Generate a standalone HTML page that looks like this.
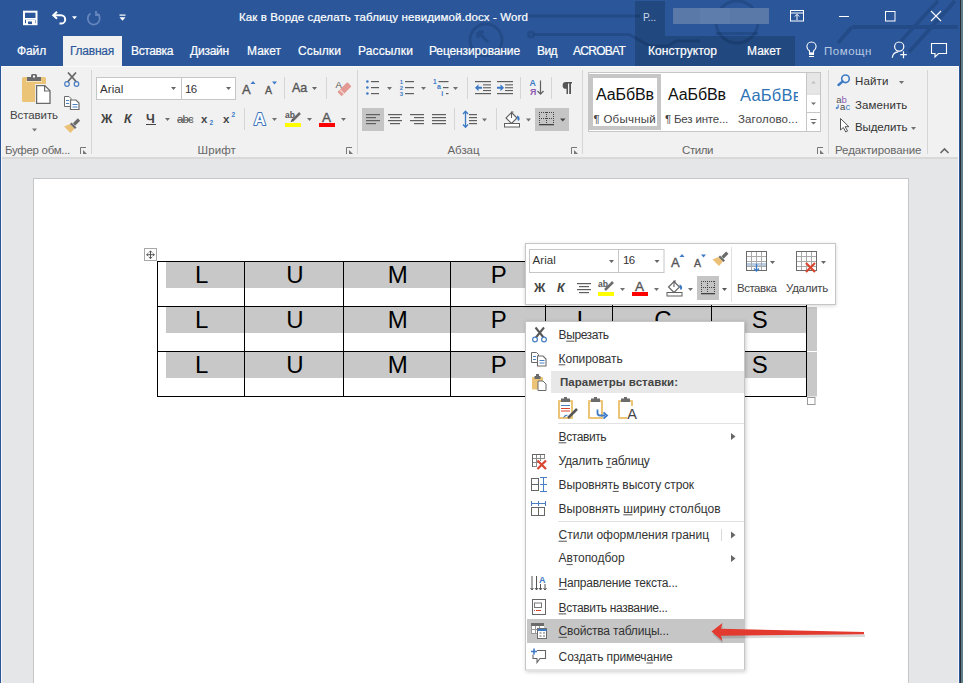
<!DOCTYPE html><html><head><meta charset="utf-8"><style>
html,body{margin:0;padding:0}
body{width:963px;height:683px;overflow:hidden;position:relative;font-family:"Liberation Sans",sans-serif;}
body>div,body>svg{position:absolute}
.t{white-space:nowrap;line-height:0;height:0}

</style></head><body>
<div style="left:0px;top:0px;width:963px;height:683px;background:#e5e6e8"></div>
<div style="left:0px;top:0px;width:960px;height:66px;background:#2b579a"></div>
<div style="left:961px;top:0px;width:2px;height:683px;background:#5f7f8b"></div>
<div style="left:960px;top:0px;width:1px;height:683px;background:#2a2d33"></div>
<div style="left:0px;top:66px;width:960px;height:617px;background:#2b579a"></div>
<div style="left:1px;top:66px;width:958px;height:91px;background:#f1f1f1;border-top:1px solid #fafafa;box-sizing:border-box"></div>
<div style="left:1px;top:157px;width:958px;height:2px;background:#d9d9d9"></div>
<div style="left:1px;top:159px;width:958px;height:524px;background:#e5e6e8"></div>
<div style="left:1px;top:66px;width:1px;height:617px;background:#f7f7f7"></div>
<div style="left:958px;top:66px;width:1px;height:617px;background:#f7f7f7"></div>
<div style="left:33px;top:178px;width:876px;height:505px;background:#fff;border-left:1px solid #c6c6c6;border-top:1px solid #c6c6c6;border-right:1px solid #c6c6c6;box-sizing:border-box"></div>
<svg style="left:0;top:0" width="963" height="683"><rect x="635" y="1" width="30" height="35" fill="#21487f"/><rect x="635" y="36" width="160" height="30" fill="#21487f"/><g fill="none" stroke="rgba(0,15,50,0.17)" stroke-width="3"><path d="M528 16H640"/><path d="M534 34.5H629L650 46H668L676 41H700"/><circle cx="531" cy="34.5" r="2.5"/><circle cx="486" cy="40" r="16"/><path d="M478 32l10 10M478 32v6M478 32h6"/><circle cx="737" cy="22" r="21"/><path d="M716 33.5h42"/><path d="M938 1L900 42M955 1L909 52M852 27H958M852 27L838 43" stroke-width="3.8"/><path d="M0 0"/></g><rect x="673" y="8" width="96" height="16" fill="#5a78a8"/><rect x="700" y="8" width="30" height="16" fill="#6080b0" opacity="0.6"/><rect x="96.5" y="77.5" width="139" height="22" fill="#fff" stroke="#c6c6c6"/><rect x="362" y="108" width="22" height="23" fill="#c5c5c5"/><rect x="535" y="108" width="34" height="23" fill="#c5c5c5"/><rect x="588.5" y="72.5" width="232" height="59" fill="#fff" stroke="#c6c6c6"/><rect x="589" y="74" width="72" height="56" fill="#c6c6c6"/><rect x="593" y="78" width="64" height="48" fill="#fff"/><rect x="806.5" y="72.5" width="14" height="59" fill="#fff" stroke="#c6c6c6"/><rect x="807" y="73" width="13" height="20" fill="#e6e6e6"/><rect x="806.5" y="93.5" width="14" height="1" fill="#c6c6c6"/><rect x="806.5" y="112" width="14" height="1" fill="#c6c6c6"/></svg>
<div class="t" style="left:239px;top:17.02px;font-size:11.5px;color:#fff;font-weight:normal;letter-spacing:0.117px;-webkit-text-stroke:0.2px #fff">Как в Ворде сделать таблицу невидимой.docx - Word</div>
<div style="left:63px;top:36px;width:59px;height:30px;background:#f1f1f1"></div>
<div class="t" style="left:17px;top:50.84px;font-size:12px;color:#fff;font-weight:normal;letter-spacing:-0.125px;-webkit-text-stroke:0.2px #fff">Файл</div>
<div class="t" style="left:70px;top:50.84px;font-size:12px;color:#2b579a;font-weight:normal;letter-spacing:-0.239px;-webkit-text-stroke:0.2px #2b579a">Главная</div>
<div class="t" style="left:131px;top:50.84px;font-size:12px;color:#fff;font-weight:normal;letter-spacing:-0.372px;-webkit-text-stroke:0.2px #fff">Вставка</div>
<div class="t" style="left:190px;top:50.84px;font-size:12px;color:#fff;font-weight:normal;letter-spacing:-0.223px;-webkit-text-stroke:0.2px #fff">Дизайн</div>
<div class="t" style="left:247px;top:50.84px;font-size:12px;color:#fff;font-weight:normal;letter-spacing:0.008px;-webkit-text-stroke:0.2px #fff">Макет</div>
<div class="t" style="left:298px;top:50.84px;font-size:12px;color:#fff;font-weight:normal;letter-spacing:0.126px;-webkit-text-stroke:0.2px #fff">Ссылки</div>
<div class="t" style="left:358px;top:50.84px;font-size:12px;color:#fff;font-weight:normal;letter-spacing:0.143px;-webkit-text-stroke:0.2px #fff">Рассылки</div>
<div class="t" style="left:429px;top:50.84px;font-size:12px;color:#fff;font-weight:normal;letter-spacing:-0.119px;-webkit-text-stroke:0.2px #fff">Рецензирование</div>
<div class="t" style="left:537px;top:50.84px;font-size:12px;color:#fff;font-weight:normal;letter-spacing:-0.570px;-webkit-text-stroke:0.2px #fff">Вид</div>
<div class="t" style="left:573px;top:50.84px;font-size:12px;color:#fff;font-weight:normal;letter-spacing:-0.731px;-webkit-text-stroke:0.2px #fff">ACROBAT</div>
<div class="t" style="left:648px;top:50.84px;font-size:12px;color:#fff;font-weight:normal;letter-spacing:0.053px;-webkit-text-stroke:0.2px #fff">Конструктор</div>
<div class="t" style="left:747px;top:50.84px;font-size:12px;color:#fff;font-weight:normal;letter-spacing:0.008px;-webkit-text-stroke:0.2px #fff">Макет</div>
<div class="t" style="left:10px;top:115.02px;font-size:11.5px;color:#444444;font-weight:normal;letter-spacing:-0.093px;">Вставить</div>
<div class="t" style="left:5px;top:150.02px;font-size:11.5px;color:#666666;font-weight:normal;letter-spacing:-0.299px;">Буфер обм...</div>
<div class="t" style="left:100px;top:89.02px;font-size:11.5px;color:#333;font-weight:normal;letter-spacing:0.099px;">Arial</div>
<div class="t" style="left:185px;top:89.02px;font-size:11.5px;color:#333;font-weight:normal;letter-spacing:-0.646px;">16</div>
<div class="t" style="left:242px;top:89.50px;font-size:13px;color:#555;font-weight:normal;-webkit-text-stroke:0.35px #555">A</div>
<div class="t" style="left:265px;top:90.36px;font-size:10.5px;color:#555;font-weight:normal;-webkit-text-stroke:0.35px #555">A</div>
<div class="t" style="left:292px;top:88.17px;font-size:12.5px;color:#555;font-weight:normal;letter-spacing:-0.145px;-webkit-text-stroke:0.35px #555">Aa</div>
<div class="t" style="left:335.5px;top:85.21px;font-size:9.5px;color:#555;font-weight:normal;">A</div>
<div class="t" style="left:101px;top:118.67px;font-size:12.5px;color:#444444;font-weight:bold;">Ж</div>
<div class="t" style="left:124px;top:118.67px;font-size:12.5px;color:#444444;font-weight:bold;font-style:italic">К</div>
<div class="t" style="left:146px;top:118.67px;font-size:12.5px;color:#444444;font-weight:bold;">Ч</div>
<div class="t" style="left:177px;top:119.02px;font-size:11.5px;color:#555;font-weight:normal;letter-spacing:-0.847px;">abc</div>
<div class="t" style="left:201px;top:119.02px;font-size:11.5px;color:#444444;font-weight:bold;">x</div>
<div class="t" style="left:209.5px;top:122.75px;font-size:6.5px;color:#3d7ac6;font-weight:bold;">2</div>
<div class="t" style="left:223px;top:119.02px;font-size:11.5px;color:#444444;font-weight:bold;">x</div>
<div class="t" style="left:231.5px;top:114.75px;font-size:6.5px;color:#3d7ac6;font-weight:bold;">2</div>
<div class="t" style="left:285px;top:115.05px;font-size:8.5px;color:#555;font-weight:bold;">ab</div>
<div class="t" style="left:322px;top:117.82px;font-size:13.5px;color:#555;font-weight:normal;-webkit-text-stroke:0.35px #555">A</div>
<div class="t" style="left:197.5px;top:150.02px;font-size:11.5px;color:#666666;font-weight:normal;letter-spacing:0.133px;">Шрифт</div>
<div class="t" style="left:447.5px;top:150.02px;font-size:11.5px;color:#666666;font-weight:normal;letter-spacing:-0.052px;">Абзац</div>
<div class="t" style="left:596px;top:94.96px;font-size:16px;color:#111;font-weight:normal;letter-spacing:-0.098px;">АаБбВв</div>
<div class="t" style="left:668px;top:94.96px;font-size:16px;color:#111;font-weight:normal;letter-spacing:-0.098px;">АаБбВв</div>
<div style="left:738px;top:80px;width:60px;height:25px;overflow:hidden"><div class="t" style="left:2px;top:15px;position:absolute;font-size:16.5px;color:#2e74b5;letter-spacing:0.2px">АаБбВв</div></div>
<div class="t" style="left:593.5px;top:119.02px;font-size:11.5px;color:#444;font-weight:normal;letter-spacing:0.255px;">¶ Обычный</div>
<div class="t" style="left:665px;top:119.02px;font-size:11.5px;color:#444;font-weight:normal;letter-spacing:-0.186px;">¶ Без инте...</div>
<div class="t" style="left:738px;top:119.02px;font-size:11.5px;color:#444;font-weight:normal;letter-spacing:0.125px;">Заголово...</div>
<div class="t" style="left:682px;top:150.02px;font-size:11.5px;color:#666666;font-weight:normal;letter-spacing:-0.426px;">Стили</div>
<div class="t" style="left:855px;top:81.02px;font-size:11.5px;color:#333;font-weight:normal;letter-spacing:0.137px;">Найти</div>
<div class="t" style="left:855px;top:105.02px;font-size:11.5px;color:#333;font-weight:normal;letter-spacing:0.078px;">Заменить</div>
<div class="t" style="left:855px;top:127.02px;font-size:11.5px;color:#333;font-weight:normal;letter-spacing:-0.094px;">Выделить</div>
<div class="t" style="left:835px;top:150.02px;font-size:11.5px;color:#666666;font-weight:normal;letter-spacing:-0.086px;">Редактирование</div>
<div class="t" style="left:643px;top:17.54px;font-size:10px;color:#cfd9ea;font-weight:normal;">Р...</div>
<div class="t" style="left:824px;top:51.02px;font-size:11.5px;color:#b9c9e4;font-weight:normal;letter-spacing:0.537px;">Помощн</div>
<svg style="left:0;top:0" width="963" height="66"><rect x="24" y="11.7" width="12.5" height="12.5" fill="none" stroke="#fff" stroke-width="2"/><rect x="25" y="18" width="11" height="1.8" fill="#fff"/><rect x="26" y="20" width="9" height="4" fill="#fff"/><rect x="28" y="21.5" width="4" height="2.6" fill="#2b579a"/><path d="M53.5 15.2H61a4.2 4.2 0 0 1 0 8.4H59.5" fill="none" stroke="#fff" stroke-width="2"/><path d="M57 11.7L53.3 15.2 57 18.7" fill="none" stroke="#fff" stroke-width="2"/><path d="M72 16.3h5l-2.5 3z" fill="#fff"/><path d="M90.5 13.5a6 6 0 1 0 6.5 0" fill="none" stroke="#6486bd" stroke-width="1.8"/><path d="M96 11v4h4" fill="none" stroke="#6486bd" stroke-width="1.8"/><rect x="119.5" y="14.5" width="6" height="1.2" fill="#fff"/><path d="M119.5 17.3h6l-3.0 3.5z" fill="#fff"/><rect x="790.5" y="10.5" width="13" height="10.5" fill="none" stroke="#fff" stroke-width="1"/><rect x="790.5" y="12.5" width="13" height="1" fill="#fff"/><path d="M797 20v-5.5M794.8 16.5l2.2-2.2 2.2 2.2" fill="none" stroke="#fff" stroke-width="1"/><rect x="839" y="16" width="10" height="1" fill="#fff"/><rect x="885.5" y="11.5" width="9.5" height="9.5" fill="none" stroke="#fff" stroke-width="1"/><path d="M931 11l10 10M941 11l-10 10" stroke="#fff" stroke-width="1.1"/><path d="M809.5 53v-2c-1.6-1-2.6-2.6-2.6-4.4a4.6 4.6 0 0 1 9.2 0c0 1.8-1 3.4-2.6 4.4v2z" fill="none" stroke="#fff" stroke-width="1.1"/><rect x="809" y="52.8" width="5" height="2.2" fill="#fff"/><rect x="809" y="56" width="5" height="1" fill="#fff"/><circle cx="899.2" cy="46.6" r="4.6" fill="none" stroke="#fff" stroke-width="1.2"/><path d="M892.3 57.8c.4-3.6 2.8-5.8 6-5.9" fill="none" stroke="#fff" stroke-width="1.2"/><path d="M900.3 54.7h6.5M903.5 51.2v7" stroke="#fff" stroke-width="1.2"/><path d="M931.5 43.5h15v10h-8l-3.5 3.5v-3.5h-3.5z" fill="none" stroke="#fff" stroke-width="1.1"/></svg>
<svg style="left:0;top:0" width="963" height="683"><rect x="166" y="262" width="640" height="26" fill="#c8c8c8"/><rect x="166" y="307" width="640" height="26" fill="#c8c8c8"/><rect x="166" y="352" width="640" height="26" fill="#c8c8c8"/><rect x="807" y="307" width="10" height="89.5" fill="#c8c8c8"/><rect x="807" y="351" width="10" height="1" fill="#fff"/><rect x="157" y="261" width="1" height="136" fill="#000"/><rect x="244" y="261" width="1" height="136" fill="#000"/><rect x="343" y="261" width="1" height="136" fill="#000"/><rect x="450" y="261" width="1" height="136" fill="#000"/><rect x="545" y="261" width="1" height="136" fill="#000"/><rect x="612" y="261" width="1" height="136" fill="#000"/><rect x="711" y="261" width="1" height="136" fill="#000"/><rect x="806" y="261" width="1" height="136" fill="#000"/><rect x="157" y="261" width="650" height="1" fill="#000"/><rect x="157" y="306" width="650" height="1" fill="#000"/><rect x="157" y="351" width="650" height="1" fill="#000"/><rect x="157" y="396" width="650" height="1" fill="#000"/><rect x="144.5" y="248.5" width="12" height="12" fill="#fff" stroke="#a8a8a8"/><path d="M150.5 251v7.5M146.8 254.7h7.5" stroke="#555" stroke-width="1"/><path d="M149 252.5l1.5-1.7 1.5 1.7M149 257l1.5 1.7 1.5-1.7M148.3 253.2l-1.7 1.5 1.7 1.5M152.7 253.2l1.7 1.5-1.7 1.5" fill="none" stroke="#555" stroke-width="0.9"/><rect x="807.5" y="397.5" width="7.5" height="7" fill="#fff" stroke="#9a9a9a"/></svg>
<div class="t" style="left:151.8px;width:100px;text-align:center;top:275.28px;font-size:24px;color:#000">L</div>
<div class="t" style="left:244.8px;width:100px;text-align:center;top:275.28px;font-size:24px;color:#000">U</div>
<div class="t" style="left:347.8px;width:100px;text-align:center;top:275.28px;font-size:24px;color:#000">M</div>
<div class="t" style="left:448.8px;width:100px;text-align:center;top:275.28px;font-size:24px;color:#000">P</div>
<div class="t" style="left:529.8px;width:100px;text-align:center;top:275.28px;font-size:24px;color:#000">I</div>
<div class="t" style="left:612.8px;width:100px;text-align:center;top:275.28px;font-size:24px;color:#000">C</div>
<div class="t" style="left:709.8px;width:100px;text-align:center;top:275.28px;font-size:24px;color:#000">S</div>
<div class="t" style="left:151.8px;width:100px;text-align:center;top:320.28px;font-size:24px;color:#000">L</div>
<div class="t" style="left:244.8px;width:100px;text-align:center;top:320.28px;font-size:24px;color:#000">U</div>
<div class="t" style="left:347.8px;width:100px;text-align:center;top:320.28px;font-size:24px;color:#000">M</div>
<div class="t" style="left:448.8px;width:100px;text-align:center;top:320.28px;font-size:24px;color:#000">P</div>
<div class="t" style="left:529.8px;width:100px;text-align:center;top:320.28px;font-size:24px;color:#000">I</div>
<div class="t" style="left:612.8px;width:100px;text-align:center;top:320.28px;font-size:24px;color:#000">C</div>
<div class="t" style="left:709.8px;width:100px;text-align:center;top:320.28px;font-size:24px;color:#000">S</div>
<div class="t" style="left:151.8px;width:100px;text-align:center;top:365.28px;font-size:24px;color:#000">L</div>
<div class="t" style="left:244.8px;width:100px;text-align:center;top:365.28px;font-size:24px;color:#000">U</div>
<div class="t" style="left:347.8px;width:100px;text-align:center;top:365.28px;font-size:24px;color:#000">M</div>
<div class="t" style="left:448.8px;width:100px;text-align:center;top:365.28px;font-size:24px;color:#000">P</div>
<div class="t" style="left:529.8px;width:100px;text-align:center;top:365.28px;font-size:24px;color:#000">I</div>
<div class="t" style="left:612.8px;width:100px;text-align:center;top:365.28px;font-size:24px;color:#000">C</div>
<div class="t" style="left:709.8px;width:100px;text-align:center;top:365.28px;font-size:24px;color:#000">S</div>
<div style="left:525px;top:243px;width:311px;height:62px;box-shadow:0 1px 4px rgba(0,0,0,0.16)"></div>
<svg style="left:0;top:0" width="963" height="683"><rect x="525.5" y="243.5" width="310" height="61" fill="#fff" stroke="#c6c6c6"/><rect x="529.5" y="249.5" width="134.5" height="23" fill="#fff" stroke="#c6c6c6"/><rect x="618" y="249.5" width="1" height="23" fill="#c6c6c6"/><rect x="697" y="276" width="22" height="24" fill="#c5c5c5"/></svg>
<div class="t" style="left:532.5px;top:260.02px;font-size:11.5px;color:#333;font-weight:normal;letter-spacing:0.099px;">Arial</div>
<div class="t" style="left:623px;top:260.02px;font-size:11.5px;color:#333;font-weight:normal;letter-spacing:-0.646px;">16</div>
<div class="t" style="left:671px;top:262.50px;font-size:13px;color:#555;font-weight:normal;-webkit-text-stroke:0.35px #555">A</div>
<div class="t" style="left:694px;top:263.36px;font-size:10.5px;color:#555;font-weight:normal;-webkit-text-stroke:0.35px #555">A</div>
<div class="t" style="left:534px;top:287.67px;font-size:12.5px;color:#444444;font-weight:bold;">Ж</div>
<div class="t" style="left:557px;top:287.67px;font-size:12.5px;color:#444444;font-weight:bold;font-style:italic">К</div>
<div class="t" style="left:598px;top:284.05px;font-size:8.5px;color:#555;font-weight:bold;">ab</div>
<div class="t" style="left:635px;top:286.82px;font-size:13.5px;color:#555;font-weight:normal;-webkit-text-stroke:0.35px #555">A</div>
<div class="t" style="left:737px;top:288.02px;font-size:11.5px;color:#444;font-weight:normal;letter-spacing:-0.478px;">Вставка</div>
<div class="t" style="left:786px;top:288.02px;font-size:11.5px;color:#444;font-weight:normal;letter-spacing:-0.272px;">Удалить</div>
<svg style="left:0;top:0" width="963" height="683"><path d="M609 260h5l-2.5 3z" fill="#666"/><path d="M654.5 260h5l-2.5 3z" fill="#666"/><path d="M679.5 257h5l-2.5-3z" fill="#3d7ac6"/><path d="M701 254.5h5l-2.5 3z" fill="#3d7ac6"/><path d="M722.5 257.5l4.8-4.8" stroke="#6b6b6b" stroke-width="3.2"/><path d="M718.5 257l4.5 4.5-4 4.5-6.5-6.5z" fill="#ebc077"/><path d="M720 255.5l5 5-1.5 1.5-5-5z" fill="#6b6b6b"/><rect x="577.0" y="283" width="14" height="1.2" fill="#5f5f5f"/><rect x="579.0" y="286" width="10" height="1.2" fill="#5f5f5f"/><rect x="577.0" y="289" width="14" height="1.2" fill="#5f5f5f"/><rect x="579.0" y="292" width="10" height="1.2" fill="#5f5f5f"/><path d="M605 290l8-8" stroke="#6b6b6b" stroke-width="2.5"/><rect x="598" y="292" width="16" height="4" fill="#ffff00"/><path d="M620 288h5l-2.5 3z" fill="#707070"/><rect x="632" y="292" width="16" height="4" fill="#ff0000"/><path d="M654 288h5l-2.5 3z" fill="#707070"/><path d="M674 281.5l5.5 5.5-5.5 5.5-5.5-5.5z" fill="#fff" stroke="#5f5f5f" stroke-width="1.1"/><path d="M674 287v-6h2" fill="none" stroke="#5f5f5f" stroke-width="1.1"/><path d="M679.5 284.5c2 .5 3 2 2.5 4.5l-1.5 1c-.5-1.5-1-3.5-1-5.5z" fill="#3d7ac6"/><rect x="667" y="292.5" width="15" height="3.5" fill="#fff" stroke="#5f5f5f" stroke-width="1"/><path d="M688 288h5l-2.5 3z" fill="#707070"/><rect x="701" y="281" width="1" height="1" fill="#444"/><rect x="701" y="287" width="1" height="1" fill="#444"/><rect x="703" y="281" width="1" height="1" fill="#444"/><rect x="703" y="287" width="1" height="1" fill="#444"/><rect x="705" y="281" width="1" height="1" fill="#444"/><rect x="705" y="287" width="1" height="1" fill="#444"/><rect x="707" y="281" width="1" height="1" fill="#444"/><rect x="707" y="287" width="1" height="1" fill="#444"/><rect x="709" y="281" width="1" height="1" fill="#444"/><rect x="709" y="287" width="1" height="1" fill="#444"/><rect x="711" y="281" width="1" height="1" fill="#444"/><rect x="711" y="287" width="1" height="1" fill="#444"/><rect x="713" y="281" width="1" height="1" fill="#444"/><rect x="713" y="287" width="1" height="1" fill="#444"/><rect x="701" y="281" width="1" height="1" fill="#444"/><rect x="707" y="281" width="1" height="1" fill="#444"/><rect x="714" y="281" width="1" height="1" fill="#444"/><rect x="701" y="283" width="1" height="1" fill="#444"/><rect x="707" y="283" width="1" height="1" fill="#444"/><rect x="714" y="283" width="1" height="1" fill="#444"/><rect x="701" y="285" width="1" height="1" fill="#444"/><rect x="707" y="285" width="1" height="1" fill="#444"/><rect x="714" y="285" width="1" height="1" fill="#444"/><rect x="701" y="287" width="1" height="1" fill="#444"/><rect x="707" y="287" width="1" height="1" fill="#444"/><rect x="714" y="287" width="1" height="1" fill="#444"/><rect x="701" y="289" width="1" height="1" fill="#444"/><rect x="707" y="289" width="1" height="1" fill="#444"/><rect x="714" y="289" width="1" height="1" fill="#444"/><rect x="701" y="291" width="1" height="1" fill="#444"/><rect x="707" y="291" width="1" height="1" fill="#444"/><rect x="714" y="291" width="1" height="1" fill="#444"/><rect x="701" y="293" width="14" height="1.3" fill="#444"/><path d="M722 288h5l-2.5 3z" fill="#555"/><rect x="731" y="247" width="1" height="55" fill="#e0e0e0"/><rect x="746.5" y="251.5" width="20" height="19" fill="#fff" stroke="#6b6b6b"/><rect x="747" y="263" width="19" height="4" fill="#b8cce4"/><path d="M751.5 252v18M756.5 252v18M761.5 252v18M747 256.5h19M747 261.5h19M747 266.5h19" stroke="#aaa" stroke-width="1"/><path d="M756.5 264v7M754 268.5l2.5 2.5 2.5-2.5" fill="none" stroke="#3d7ac6" stroke-width="1.3"/><path d="M770 261h5l-2.5 3z" fill="#666"/><rect x="796.5" y="251.5" width="20" height="19" fill="#fff" stroke="#6b6b6b"/><path d="M801.5 252v18M806.5 252v18M811.5 252v18M797 256.5h19M797 261.5h19M797 266.5h19" stroke="#aaa" stroke-width="1"/><path d="M806 263l9 9M815 263l-9 9" stroke="#d9452f" stroke-width="2.2"/><path d="M821 261h5l-2.5 3z" fill="#666"/></svg>
<div style="left:525px;top:321px;width:220px;height:350px;box-shadow:1px 1px 4px rgba(0,0,0,0.2)"></div>
<svg style="left:0;top:0" width="963" height="683"><rect x="525.5" y="321.5" width="219" height="348.5" fill="#fff" stroke="#c6c6c6"/><rect x="551" y="371" width="193" height="22" fill="#e8e8e8"/><rect x="527" y="619" width="217" height="24" fill="#c6c6c6"/><rect x="558" y="423" width="186" height="1" fill="#e2e2e2"/><rect x="558" y="521" width="186" height="1" fill="#e2e2e2"/></svg>
<div class="t" style="left:558.6px;top:335.04px;font-size:12px;color:#333;font-weight:normal;letter-spacing:-0.422px;">Вырезать</div>
<div class="t" style="left:558.6px;top:358.64px;font-size:12px;color:#333;font-weight:normal;letter-spacing:-0.061px;">Копировать</div>
<div class="t" style="left:558.6px;top:436.64px;font-size:12px;color:#333;font-weight:normal;letter-spacing:-0.421px;">Вставить</div>
<div class="t" style="left:558.6px;top:461.24px;font-size:12px;color:#333;font-weight:normal;letter-spacing:-0.206px;">Удалить таблицу</div>
<div class="t" style="left:558.6px;top:485.24px;font-size:12px;color:#333;font-weight:normal;letter-spacing:-0.080px;">Выровнять высоту строк</div>
<div class="t" style="left:558.6px;top:508.64px;font-size:12px;color:#333;font-weight:normal;letter-spacing:0.014px;">Выровнять ширину столбцов</div>
<div class="t" style="left:558.6px;top:535.04px;font-size:12px;color:#333;font-weight:normal;letter-spacing:-0.018px;">Стили оформления границ</div>
<div class="t" style="left:558.6px;top:558.44px;font-size:12px;color:#333;font-weight:normal;letter-spacing:-0.028px;">Автоподбор</div>
<div class="t" style="left:558.6px;top:583.24px;font-size:12px;color:#333;font-weight:normal;letter-spacing:-0.226px;">Направление текста...</div>
<div class="t" style="left:558.6px;top:607.74px;font-size:12px;color:#333;font-weight:normal;letter-spacing:-0.339px;">Вставить название...</div>
<div class="t" style="left:558.6px;top:631.14px;font-size:12px;color:#333;font-weight:normal;letter-spacing:-0.179px;">Свойства таблицы...</div>
<div class="t" style="left:558.6px;top:656.84px;font-size:12px;color:#333;font-weight:normal;letter-spacing:-0.126px;">Создать примечание</div>
<div class="t" style="left:560px;top:382.02px;font-size:11.5px;color:#444;font-weight:bold;letter-spacing:0.031px;">Параметры вставки:</div>
<svg style="left:0;top:0" width="963" height="683"><path d="M731 433.0l4.5 3.5-4.5 3.5z" fill="#666"/><path d="M731 531.5l4.5 3.5-4.5 3.5z" fill="#666"/><path d="M731 555.0l4.5 3.5-4.5 3.5z" fill="#666"/><rect x="721" y="529" width="1" height="12" fill="#dadada"/><path d="M535.5 327.5l8.5 10.5M544 327.5l-8.5 10.5" stroke="#555" stroke-width="2"/><circle cx="535" cy="339.5" r="2.4" fill="#fff" stroke="#4a7fc1" stroke-width="1.2"/><circle cx="544" cy="339.5" r="2.4" fill="#fff" stroke="#4a7fc1" stroke-width="1.2"/><path d="M531.5 352.5h5l2 2v8h-7z" fill="#fff" stroke="#6b6b6b" stroke-width="1"/><path d="M537.5 356h5.5l3 3v7h-8.5z" fill="#fff" stroke="#6b6b6b" stroke-width="1.1"/><rect x="533" y="356" width="3" height="1" fill="#4a7fc1"/><rect x="533" y="359" width="3" height="1" fill="#4a7fc1"/><rect x="539.5" y="360" width="5" height="1" fill="#4a7fc1"/><rect x="539.5" y="362.5" width="5" height="1" fill="#4a7fc1"/><rect x="532" y="377" width="11" height="12.5" rx="1" fill="#ebc477"/><rect x="534.5" y="376" width="6" height="3" fill="#6b6b6b"/><rect x="536" y="374" width="3" height="2.5" fill="#6b6b6b"/><path d="M538 381h5l3 3v6.5h-8z" fill="#fff" stroke="#6b6b6b" stroke-width="1"/><rect x="558" y="400" width="15" height="19" rx="1" fill="#ebc477"/><rect x="560" y="402" width="11" height="15" fill="#fff"/><rect x="561" y="398.5" width="9" height="3.5" fill="#6b6b6b"/><rect x="564" y="397" width="3" height="2" fill="#6b6b6b"/><rect x="588" y="400" width="15" height="19" rx="1" fill="#ebc477"/><rect x="590" y="402" width="11" height="15" fill="#fff"/><rect x="591" y="398.5" width="9" height="3.5" fill="#6b6b6b"/><rect x="594" y="397" width="3" height="2" fill="#6b6b6b"/><rect x="618" y="400" width="15" height="19" rx="1" fill="#ebc477"/><rect x="620" y="402" width="11" height="15" fill="#fff"/><rect x="621" y="398.5" width="9" height="3.5" fill="#6b6b6b"/><rect x="624" y="397" width="3" height="2" fill="#6b6b6b"/><rect x="561" y="405" width="9" height="1" fill="#4a7fc1"/><rect x="561" y="408" width="9" height="1" fill="#d9452f"/><rect x="561" y="410.5" width="9" height="1" fill="#d9452f"/><path d="M568 418l9-9" stroke="#555" stroke-width="2.5"/><path d="M563 418c1-3 3-4 5-3z" fill="#3d7ac6"/><path d="M597.5 409.5v3.5a2.5 2.5 0 0 0 2.5 2.5h5" fill="none" stroke="#3d7ac6" stroke-width="1.8"/><path d="M603.5 412.3l3.5 3.2-3.5 3.2" fill="none" stroke="#3d7ac6" stroke-width="1.8"/><rect x="627" y="406" width="11" height="14" fill="#fff"/><text x="627.3" y="419" font-family="Liberation Sans" font-size="14.5" fill="#444">A</text><path d="M532.5 454v13M536.5 454v13M540.5 454v7M544.5 454v4M532 454.5h13M532 458.5h13M532 462.5h6M532 466.5h5" stroke="#8a8a8a" stroke-width="1"/><path d="M532.5 454v13M532 454.5h13" stroke="#666" stroke-width="1"/><path d="M537.5 460.5l8.5 8.5M546 460.5l-8.5 8.5" stroke="#d9452f" stroke-width="2.2"/><rect x="531.5" y="478.5" width="7" height="12" fill="none" stroke="#666"/><rect x="531.5" y="484" width="7" height="1" fill="#666"/><path d="M543.5 477v15M540 477.5h7M540 484.5h7M540 491.5h7" stroke="#4a7fc1" stroke-width="1"/><rect x="531.5" y="507.5" width="13" height="8" fill="none" stroke="#666"/><rect x="538" y="507.5" width="1" height="8" fill="#666"/><path d="M531 503.5h15M531.5 501v5M538.5 501v5M545.5 501v5" stroke="#4a7fc1" stroke-width="1"/><path d="M532 576v14M536.5 576v14M540.5 584v6M545 584v6M530.5 588l1.5 2 1.5-2M535 588l1.5 2 1.5-2M539 588l1.5 2 1.5-2M543.5 588l1.5 2 1.5-2" fill="none" stroke="#555" stroke-width="1"/><text x="539" y="582.5" font-family="Liberation Sans" font-size="9" font-weight="bold" fill="#3d7ac6">A</text><rect x="532.5" y="599.5" width="13" height="15" fill="#fff" stroke="#666"/><rect x="534.5" y="603" width="7" height="4.5" fill="none" stroke="#777"/><rect x="534" y="610" width="1" height="1" fill="#d9452f"/><rect x="536" y="610" width="5" height="1" fill="#d9452f"/><rect x="531" y="623" width="13" height="3" fill="#6b6b6b"/><rect x="531" y="626" width="13" height="8" fill="#fff"/><path d="M531.5 626v8M535.5 626v8M539.5 626v3M531 629.5h13M531 633.5h7" stroke="#999" stroke-width="1"/><rect x="537.5" y="628.5" width="9" height="10" fill="#fff" stroke="#6b6b6b"/><rect x="538" y="629" width="8.5" height="2" fill="#3d7ac6"/><path d="M539.5 633h2M543 633h2M539.5 636h2M543 636h2" stroke="#666"/><path d="M537 650.5h8.5v8h-5.5l-3 4v-4h-4v-4" fill="none" stroke="#666" stroke-width="1.1"/><path d="M534 648.5v6M531 651.5h6" stroke="#3d7ac6" stroke-width="1.6"/><rect x="566.13" y="340.7" width="8.27" height="1" fill="#555"/><rect x="558.60" y="364.3" width="6.70" height="1" fill="#555"/><rect x="558.60" y="442.3" width="7.67" height="1" fill="#555"/><rect x="606.14" y="466.9" width="5.27" height="1" fill="#555"/><rect x="612.72" y="490.9" width="5.99" height="1" fill="#555"/><rect x="623.30" y="514.3" width="9.23" height="1" fill="#555"/><rect x="558.60" y="540.7" width="8.30" height="1" fill="#555"/><rect x="566.52" y="564.1" width="6.11" height="1" fill="#555"/><rect x="558.60" y="588.9" width="8.30" height="1" fill="#555"/><rect x="558.60" y="613.4" width="7.67" height="1" fill="#555"/><rect x="558.60" y="636.8" width="8.30" height="1" fill="#555"/><rect x="646.46" y="662.5" width="6.40" height="1" fill="#555"/></svg>
<svg style="left:0;top:0" width="963" height="683"><path d="M711.5 632.5L722 623.5 720.5 629.5 864 632.5 864 635 720.5 636.5 722 641.5z" fill="rgba(0,0,0,0.15)" transform="translate(1,2)"/><path d="M711.5 631.5L722.5 623 721 628.7 864 632 864 634.2 721 635.8 722.5 641z" fill="#e23a2e"/></svg>
<svg style="left:0;top:0" width="963" height="683">
<rect x="22" y="77" width="24" height="25" rx="1.5" fill="#ebc477"/>
<rect x="27" y="77" width="14" height="4" fill="#6b6b6b"/>
<rect x="31" y="74" width="6" height="4" rx="1.5" fill="#6b6b6b"/>
<rect x="33" y="75.5" width="2" height="2" fill="#fff"/>
<rect x="26" y="81" width="16" height="1" fill="#f6e3bb"/>
<path d="M35 84h10.5l5.5 5.5V105H35z" fill="#f1f1f1"/>
<path d="M36.6 85.6h8.2l5.2 5.2v12.6H36.6z" fill="#fff" stroke="#6b6b6b" stroke-width="1.3"/>
<path d="M44.6 85.6v5.4h5.4" fill="none" stroke="#6b6b6b" stroke-width="1.2"/>
<path d="M32 128.5h5l-2.5 3z" fill="#777"/>
<path d="M68 72.5l8.5 9.5M76 72.5l-8.5 9.5" stroke="#666" stroke-width="1.8"/>
<circle cx="67" cy="84" r="2.3" fill="none" stroke="#4a7fc1" stroke-width="1.2"/>
<circle cx="76.5" cy="84" r="2.3" fill="none" stroke="#4a7fc1" stroke-width="1.2"/>

<path d="M64.5 96.5h4.5l2 2v8h-6.5z" fill="#fff" stroke="#6b6b6b" stroke-width="1"/>
<path d="M70.5 100h5.5l3 3v6.5h-8.5z" fill="#fff" stroke="#6b6b6b" stroke-width="1.2"/>
<rect x="66" y="100" width="3" height="1" fill="#4a7fc1"/><rect x="66" y="103" width="3" height="1" fill="#4a7fc1"/>
<rect x="72.5" y="104" width="5" height="1" fill="#4a7fc1"/><rect x="72.5" y="106.5" width="5" height="1" fill="#4a7fc1"/>

<path d="M74 124.5l5-5" stroke="#6b6b6b" stroke-width="3.2"/>
<path d="M70 124l4.5 4.5-4 4.5-6.5-6.5z" fill="#ebc077"/>
<path d="M71.5 122.5l5 5 -1.5 1.5-5-5z" fill="#6b6b6b"/>
<rect x="91" y="70" width="1" height="84" fill="#d5d5d5"/><path d="M80.5 154V147.5H86" fill="none" stroke="#777" stroke-width="1"/><path d="M83 150l4 4h-4z" fill="#777"/><rect x="181" y="77.5" width="1" height="22" fill="#c6c6c6"/><path d="M171 87h5l-2.5 3z" fill="#666"/><path d="M226 87h5l-2.5 3z" fill="#666"/><path d="M250.5 84h5l-2.5-3z" fill="#3d7ac6"/><path d="M272 81.5h5l-2.5 3z" fill="#3d7ac6"/><rect x="284" y="77" width="1" height="22" fill="#d5d5d5"/><path d="M312 87h5l-2.5 3z" fill="#666"/><rect x="326" y="77" width="1" height="22" fill="#d5d5d5"/><g transform="translate(344.5 89.2) rotate(-45)"><rect x="-7" y="-3" width="14" height="6" rx="1" fill="#e39a94"/><rect x="-4.2" y="-3" width="1" height="6" fill="#f8e0de"/></g><rect x="146" y="124" width="10" height="1" fill="#444"/><path d="M165 118h5l-2.5 3z" fill="#707070"/><rect x="177" y="119.5" width="16" height="1" fill="#555"/><rect x="244" y="108" width="1" height="22" fill="#d5d5d5"/><text x="253.8" y="125" font-family="Liberation Sans" font-size="16.5" font-weight="bold" fill="#3d74bb" stroke="#3d74bb" stroke-width="2" stroke-linejoin="round">A</text><text x="253.8" y="125" font-family="Liberation Sans" font-size="16.5" font-weight="bold" fill="#fff">A</text><path d="M272 118h5l-2.5 3z" fill="#707070"/><path d="M292 121l8-8" stroke="#6b6b6b" stroke-width="2.5"/><path d="M291 122l2-3" stroke="#444" stroke-width="1"/><rect x="285" y="123" width="16" height="4" fill="#ffff00"/><path d="M307 118h5l-2.5 3z" fill="#707070"/><rect x="319" y="123" width="16" height="4" fill="#ff0000"/><path d="M341 118h5l-2.5 3z" fill="#707070"/><path d="M346.5 154V147.5H352" fill="none" stroke="#777" stroke-width="1"/><path d="M349 150l4 4h-4z" fill="#777"/><rect x="357" y="70" width="1" height="84" fill="#d5d5d5"/><circle cx="367.4" cy="81.5" r="1.3" fill="#3d7ac6"/><rect x="371" y="81" width="8" height="1.2" fill="#5f5f5f"/><circle cx="367.4" cy="87.5" r="1.3" fill="#3d7ac6"/><rect x="371" y="87" width="8" height="1.2" fill="#5f5f5f"/><circle cx="367.4" cy="93.5" r="1.3" fill="#3d7ac6"/><rect x="371" y="93" width="8" height="1.2" fill="#5f5f5f"/><path d="M387 87h5l-2.5 3z" fill="#707070"/><rect x="405" y="81" width="9" height="1.2" fill="#5f5f5f"/><rect x="405" y="87" width="9" height="1.2" fill="#5f5f5f"/><rect x="405" y="93" width="9" height="1.2" fill="#5f5f5f"/><text x="399.8" y="84.2" font-family="Liberation Sans" font-size="6" font-weight="bold" fill="#3d7ac6">1</text><text x="399.8" y="90.2" font-family="Liberation Sans" font-size="6" font-weight="bold" fill="#3d7ac6">2</text><text x="399.8" y="96.2" font-family="Liberation Sans" font-size="6" font-weight="bold" fill="#3d7ac6">3</text><path d="M421 87h5l-2.5 3z" fill="#707070"/><text x="433" y="84.2" font-family="Liberation Sans" font-size="6.5" font-weight="bold" fill="#3d7ac6">1</text><text x="437" y="89.3" font-family="Liberation Sans" font-size="7" font-weight="bold" fill="#3d7ac6">a</text><text x="441.3" y="95.8" font-family="Liberation Sans" font-size="7" font-weight="bold" fill="#3d7ac6">i</text><rect x="438.5" y="81" width="10" height="1.2" fill="#5f5f5f"/><rect x="443" y="87" width="5.5" height="1.2" fill="#5f5f5f"/><rect x="446" y="93" width="2.5" height="1.2" fill="#5f5f5f"/><path d="M453 87h5l-2.5 3z" fill="#707070"/><rect x="467" y="77" width="1" height="22" fill="#d5d5d5"/><rect x="475" y="81" width="16" height="1.2" fill="#5f5f5f"/><rect x="475" y="93" width="16" height="1.2" fill="#5f5f5f"/><rect x="483" y="84.3" width="8" height="1.1" fill="#5f5f5f"/><rect x="483" y="87.2" width="8" height="1.1" fill="#5f5f5f"/><rect x="483" y="90" width="8" height="1.1" fill="#5f5f5f"/><path d="M475 87.7l3.5-3.5v2.5h3.5v2h-3.5v2.5z" fill="#3d7ac6"/><rect x="497" y="81" width="16" height="1.2" fill="#5f5f5f"/><rect x="497" y="93" width="16" height="1.2" fill="#5f5f5f"/><rect x="505" y="84.3" width="8" height="1.1" fill="#5f5f5f"/><rect x="505" y="87.2" width="8" height="1.1" fill="#5f5f5f"/><rect x="505" y="90" width="8" height="1.1" fill="#5f5f5f"/><path d="M504 87.7l-3.5-3.5v2.5h-3.5v2h3.5v2.5z" fill="#3d7ac6"/><rect x="520" y="77" width="1" height="22" fill="#d5d5d5"/><text x="529.6" y="86.4" font-family="Liberation Sans" font-size="8.8" font-weight="bold" fill="#3d7ac6">A</text><text x="530" y="94.8" font-family="Liberation Sans" font-size="8.8" font-weight="bold" fill="#8e5bb0">Я</text><path d="M540.5 80.5v13.5M537.5 91l3 3.2 3-3.2" fill="none" stroke="#5f5f5f" stroke-width="1.2"/><rect x="551" y="77" width="1" height="22" fill="#d5d5d5"/><path d="M566.5 82h5.5v1.6h-1v10.4h-1.8V83.6h-1.2V94h-1.5V88.8h-0.5a3.4 3.4 0 0 1 0-6.8z" fill="#555"/><rect x="366" y="114" width="14" height="1.2" fill="#5f5f5f"/><rect x="366" y="117" width="10" height="1.2" fill="#5f5f5f"/><rect x="366" y="120" width="14" height="1.2" fill="#5f5f5f"/><rect x="366" y="123" width="10" height="1.2" fill="#5f5f5f"/><rect x="388.0" y="114" width="14" height="1.2" fill="#5f5f5f"/><rect x="390.0" y="117" width="10" height="1.2" fill="#5f5f5f"/><rect x="388.0" y="120" width="14" height="1.2" fill="#5f5f5f"/><rect x="390.0" y="123" width="10" height="1.2" fill="#5f5f5f"/><rect x="410" y="114" width="14" height="1.2" fill="#5f5f5f"/><rect x="414" y="117" width="10" height="1.2" fill="#5f5f5f"/><rect x="410" y="120" width="14" height="1.2" fill="#5f5f5f"/><rect x="414" y="123" width="10" height="1.2" fill="#5f5f5f"/><rect x="432" y="114" width="14" height="1.2" fill="#5f5f5f"/><rect x="432" y="117" width="14" height="1.2" fill="#5f5f5f"/><rect x="432" y="120" width="14" height="1.2" fill="#5f5f5f"/><rect x="432" y="123" width="14" height="1.2" fill="#5f5f5f"/><rect x="454" y="108" width="1" height="22" fill="#d5d5d5"/><path d="M465.5 111.5v15.5M463 114l2.5-2.8 2.5 2.8M463 124.5l2.5 2.8 2.5-2.8" fill="none" stroke="#3d7ac6" stroke-width="1.3"/><rect x="469" y="114" width="8" height="1.2" fill="#5f5f5f"/><rect x="469" y="117" width="8" height="1.2" fill="#5f5f5f"/><rect x="469" y="120" width="8" height="1.2" fill="#5f5f5f"/><rect x="469" y="123" width="8" height="1.2" fill="#5f5f5f"/><path d="M482 118.5h5l-2.5 3z" fill="#707070"/><rect x="496" y="108" width="1" height="22" fill="#d5d5d5"/><path d="M511.5 112.5l5.5 5.5-5.5 5.5-5.5-5.5z" fill="#fff" stroke="#5f5f5f" stroke-width="1.1"/><path d="M511.5 118v-6h2" fill="none" stroke="#5f5f5f" stroke-width="1.1"/><path d="M517 115.5c2 .5 3 2 2.5 4.5l-1.5 1c-.5-1.5-1-3.5-1-5.5z" fill="#3d7ac6"/><rect x="504.5" y="123.5" width="15" height="3.5" fill="#fff" stroke="#5f5f5f" stroke-width="1"/><path d="M526 118.5h5l-2.5 3z" fill="#707070"/><rect x="539" y="112" width="1" height="1" fill="#444"/><rect x="539" y="118" width="1" height="1" fill="#444"/><rect x="541" y="112" width="1" height="1" fill="#444"/><rect x="541" y="118" width="1" height="1" fill="#444"/><rect x="543" y="112" width="1" height="1" fill="#444"/><rect x="543" y="118" width="1" height="1" fill="#444"/><rect x="545" y="112" width="1" height="1" fill="#444"/><rect x="545" y="118" width="1" height="1" fill="#444"/><rect x="547" y="112" width="1" height="1" fill="#444"/><rect x="547" y="118" width="1" height="1" fill="#444"/><rect x="549" y="112" width="1" height="1" fill="#444"/><rect x="549" y="118" width="1" height="1" fill="#444"/><rect x="551" y="112" width="1" height="1" fill="#444"/><rect x="551" y="118" width="1" height="1" fill="#444"/><rect x="553" y="112" width="1" height="1" fill="#444"/><rect x="553" y="118" width="1" height="1" fill="#444"/><rect x="539" y="112" width="1" height="1" fill="#444"/><rect x="546" y="112" width="1" height="1" fill="#444"/><rect x="553" y="112" width="1" height="1" fill="#444"/><rect x="539" y="114" width="1" height="1" fill="#444"/><rect x="546" y="114" width="1" height="1" fill="#444"/><rect x="553" y="114" width="1" height="1" fill="#444"/><rect x="539" y="116" width="1" height="1" fill="#444"/><rect x="546" y="116" width="1" height="1" fill="#444"/><rect x="553" y="116" width="1" height="1" fill="#444"/><rect x="539" y="118" width="1" height="1" fill="#444"/><rect x="546" y="118" width="1" height="1" fill="#444"/><rect x="553" y="118" width="1" height="1" fill="#444"/><rect x="539" y="120" width="1" height="1" fill="#444"/><rect x="546" y="120" width="1" height="1" fill="#444"/><rect x="553" y="120" width="1" height="1" fill="#444"/><rect x="539" y="122" width="1" height="1" fill="#444"/><rect x="546" y="122" width="1" height="1" fill="#444"/><rect x="553" y="122" width="1" height="1" fill="#444"/><rect x="539" y="124" width="15" height="1.3" fill="#444"/><path d="M560 118.5h5.5l-2.75 3z" fill="#444"/><path d="M571.5 154V147.5H577" fill="none" stroke="#777" stroke-width="1"/><path d="M574 150l4 4h-4z" fill="#777"/><rect x="582" y="70" width="1" height="84" fill="#d5d5d5"/><path d="M811 83.5h5l-2.5-2.5z" fill="#c0c0c0"/><path d="M811 102.5h5l-2.5 2.5z" fill="#707070"/><rect x="810.5" y="119" width="6" height="1" fill="#707070"/><path d="M811 122h5l-2.5 2.5z" fill="#707070"/><path d="M817.5 154V147.5H823" fill="none" stroke="#777" stroke-width="1"/><path d="M820 150l4 4h-4z" fill="#777"/><rect x="828" y="70" width="1" height="84" fill="#d5d5d5"/><circle cx="845.5" cy="78.8" r="3.8" fill="none" stroke="#3d7ac6" stroke-width="1.6"/><path d="M838.5 85l4.2-3.6" stroke="#3d7ac6" stroke-width="2.4" stroke-linecap="round"/><path d="M899 81h5l-2.5 3z" fill="#707070"/><text x="836.2" y="103.3" font-family="Liberation Sans" font-size="9.5" fill="#555">a</text><text x="841.5" y="103.3" font-family="Liberation Sans" font-size="9.5" fill="#8e5bb0">b</text><text x="840" y="110.3" font-family="Liberation Sans" font-size="9.5" fill="#444">a</text><text x="845.6" y="110.3" font-family="Liberation Sans" font-size="9.5" fill="#3d7ac6">c</text><path d="M838.2 104.5v3.5h-1.8" fill="none" stroke="#3d7ac6" stroke-width="1"/><path d="M835.5 108l1.8-1.6v3.2z" fill="#3d7ac6"/><path d="M840.5 118.5v11.5l2.8-2.5 2.5 4.5 1.8-1-2.5-4.3h3.8z" fill="#fff" stroke="#555" stroke-width="1"/><path d="M911 127h5l-2.5 3z" fill="#707070"/><rect x="927" y="70" width="1" height="84" fill="#d5d5d5"/><path d="M940.5 153l4-4 4 4" fill="none" stroke="#666" stroke-width="1.6"/></svg>
</body></html>
